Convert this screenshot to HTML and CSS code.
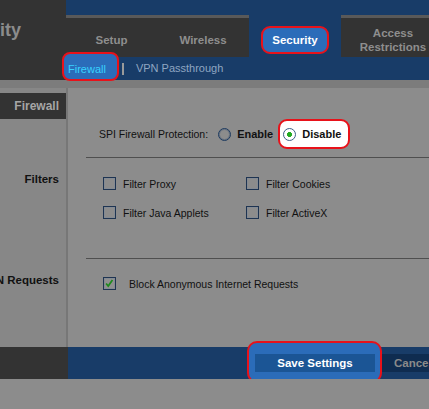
FILE: index.html
```html
<!DOCTYPE html>
<html>
<head>
<meta charset="utf-8">
<title>Security - Firewall</title>
<link rel="stylesheet" href="styles.css">
</head>
<body>
<div class="page">
  <header class="top">
    <div class="brand"><div class="brand-clip"><span>Security</span></div></div>
    <div class="nav">
      <div class="strip"></div>
      <ul class="tabs">
        <li class="tab tab-setup">Setup</li>
        <li class="tab">Wireless</li>
        <li class="tab tab-active"><span class="hl hl-tab">Security</span></li>
        <li class="tab tab-wide">Access<br>Restrictions</li>
      </ul>
      <div class="subnav">
        <span class="hl hl-sub">Firewall</span>
        <span class="sep"></span>
        <span class="sublink">VPN Passthrough</span>
      </div>
    </div>
  </header>
  <div class="stripe"></div>
  <main class="main">
    <div class="side side-first"><div class="side-head">Firewall</div></div>
    <section class="cell">
      <div class="sect sect-spi">
        <div class="spi-row">
          <span class="lbl">SPI Firewall Protection:</span>
          <span class="opt"><span class="radio"></span><b>Enable</b></span>
          <span class="hl hl-opt"><span class="radio radio-on"></span><b>Disable</b></span>
        </div>
      </div>
    </section>
    <div class="side"><span>Filters</span></div>
    <section class="cell">
      <div class="sect sect-filters">
        <label class="check-item"><span class="box"></span>Filter Proxy</label>
        <label class="check-item"><span class="box"></span>Filter Cookies</label>
        <label class="check-item"><span class="box"></span>Filter Java Applets</label>
        <label class="check-item"><span class="box"></span>Filter ActiveX</label>
      </div>
    </section>
    <div class="side"><span>Block WAN Requests</span></div>
    <section class="cell">
      <div class="sect sect-block">
        <label class="check-item check-wide"><span class="box box-on"><svg viewBox="0 0 13 13" width="11" height="11"><path d="M2.5 6.5 L5 9.5 L10 2.5" fill="none" stroke="#1d8a1d" stroke-width="2"/></svg></span>Block Anonymous Internet Requests</label>
      </div>
    </section>
  </main>
  <footer class="foot">
    <div class="foot-side"></div>
    <div class="foot-bar">
      <div class="hl hl-save"><span class="btn btn-save">Save Settings</span></div>
      <span class="btn btn-cancel">Cancel Changes</span>
    </div>
  </footer>
</div>
</body>
</html>
```

FILE: styles.css
```css
html, body {
  margin: 0;
  padding: 0;
}
body {
  background: #8c8c8c;
  font-family: "Liberation Sans", Arial, sans-serif;
  overflow: hidden;
  color: #111;
}
.page {
  width: 429px;
}

/* header */
.top {
  display: flex;
  height: 80px;
  background: #333;
}
.brand {
  width: 66px;
  flex: none;
}
.brand-clip {
  width: 21px;
  display: flex;
  justify-content: flex-end;
  padding-top: 20px;
  white-space: nowrap;
  font-weight: bold;
  font-size: 18px;
  line-height: 21px;
  color: #8c8c8c;
}
.nav {
  flex: 1;
  min-width: 0;
  display: flex;
  flex-direction: column;
}
.strip {
  height: 15px;
  background: #183c68;
}
.tabs {
  display: flex;
  margin: 0;
  padding: 0;
  list-style: none;
  height: 42px;
}
.tab {
  flex: none;
  width: 92px;
  box-sizing: border-box;
  border-top: 3px solid #595959;
  display: flex;
  align-items: center;
  justify-content: center;
  padding-top: 4px;
  font-weight: bold;
  font-size: 11.5px;
  line-height: 14px;
  color: #8e8e8e;
  text-align: center;
}
.tab-setup {
  width: 91px;
}
.tab-wide {
  width: 104px;
}
.tab-active {
  background: #183c68;
  border-top-color: #183c68;
}
.hl {
  border: 2px solid #e8121a;
  background: #2b6cb9;
  border-radius: 9px;
  box-sizing: border-box;
}
.hl-tab {
  padding: 5px 9px;
  color: #fff;
}
.subnav {
  height: 23px;
  background: #183c68;
  display: flex;
  align-items: center;
  font-size: 11px;
  line-height: 13px;
  white-space: nowrap;
}
.hl-sub {
  align-self: flex-start;
  margin: -5px 0 0 -4px;
  height: 29px;
  padding: 5px 11px 0 4px;
  display: flex;
  align-items: center;
  color: #38d2ff;
  border-radius: 8px;
}
.sep {
  width: 2px;
  height: 12px;
  background: #9a9a9a;
  margin-left: 3px;
}
.sublink {
  margin-left: 12px;
  color: #8fa6c2;
}
.stripe {
  height: 8px;
  background: #7c7c7c;
}

/* main */
.main {
  display: grid;
  grid-template-columns: 66px 1fr;
  grid-template-rows: 70px 101px 88px;
}
.side {
  background: #878787;
  display: flex;
  justify-content: flex-end;
  padding: 15px 7px 0 0;
  white-space: nowrap;
  font-weight: bold;
  font-size: 11.5px;
  line-height: 13px;
  color: #111;
  min-width: 0;
}
.side-first {
  display: block;
  padding: 5px 0 0 0;
}
.side-head {
  height: 26px;
  background: #333;
  color: #a6a6a6;
  font-size: 12px;
  display: flex;
  justify-content: flex-end;
  align-items: center;
  padding-right: 7px;
}
.cell {
  border-left: 2px solid #777;
  padding-left: 18px;
  min-width: 0;
  background: #8c8c8c;
}
.sect {
  height: 100%;
  box-sizing: border-box;
  border-bottom: 1px solid #4f4f4f;
  font-size: 10.5px;
}
.sect-spi {
  padding-top: 31px;
}
.spi-row {
  display: flex;
  align-items: center;
  height: 30px;
  padding-left: 13px;
  white-space: nowrap;
}
.opt {
  display: flex;
  align-items: center;
  gap: 6px;
  margin-left: 10px;
  font-size: 11px;
}
.hl-opt {
  display: flex;
  align-items: center;
  gap: 6px;
  height: 30px;
  margin-left: 5px;
  padding: 0 7px 0 3px;
  background: #fff;
  font-size: 11px;
}
.radio {
  width: 13px;
  height: 13px;
  box-sizing: border-box;
  border-radius: 50%;
  border: 1px solid #1d3a5f;
  box-shadow: inset 0 0 0 1px rgba(40, 70, 110, 0.35);
  flex: none;
}
.radio-on {
  border-color: #3d5f88;
  background: radial-gradient(circle, #22aa22 0 2.2px, #ffffff 2.8px);
  box-shadow: none;
}
.sect-filters {
  padding: 19px 0 0 17px;
  display: grid;
  grid-template-columns: 143px auto;
  row-gap: 16px;
  align-content: start;
}
.check-item {
  display: flex;
  align-items: center;
  gap: 7px;
  height: 13px;
  white-space: nowrap;
}
.check-wide {
  gap: 13px;
}
.box {
  width: 13px;
  height: 13px;
  box-sizing: border-box;
  border: 1px solid #1e3452;
  box-shadow: inset 0 0 0 1px #848a92;
  flex: none;
  display: flex;
  align-items: center;
  justify-content: center;
}
.box-on {
  background: #909090;
}
.sect-block {
  padding: 18px 0 0 17px;
  border-bottom: none;
}

/* footer */
.foot {
  display: flex;
  height: 32px;
}
.foot-side {
  width: 68px;
  flex: none;
  background: #333;
}
.foot-bar {
  flex: 1;
  background: #183c68;
  display: flex;
  align-items: flex-start;
  padding-left: 179px;
  min-width: 0;
}
.hl-save {
  flex: none;
  margin-top: -6px;
  padding: 11px 5px 9px 6px;
  border-radius: 10px;
}
.btn {
  display: flex;
  align-items: center;
  justify-content: center;
  height: 18px;
  font-weight: bold;
  font-size: 11.5px;
  white-space: nowrap;
}
.btn-save {
  width: 120px;
  background: #1b5595;
  color: #fff;
}
.btn-cancel {
  flex: none;
  margin-top: 7px;
  background: #0f2c50;
  color: #8a8a8a;
  padding: 0 10px 0 12px;
}
```
